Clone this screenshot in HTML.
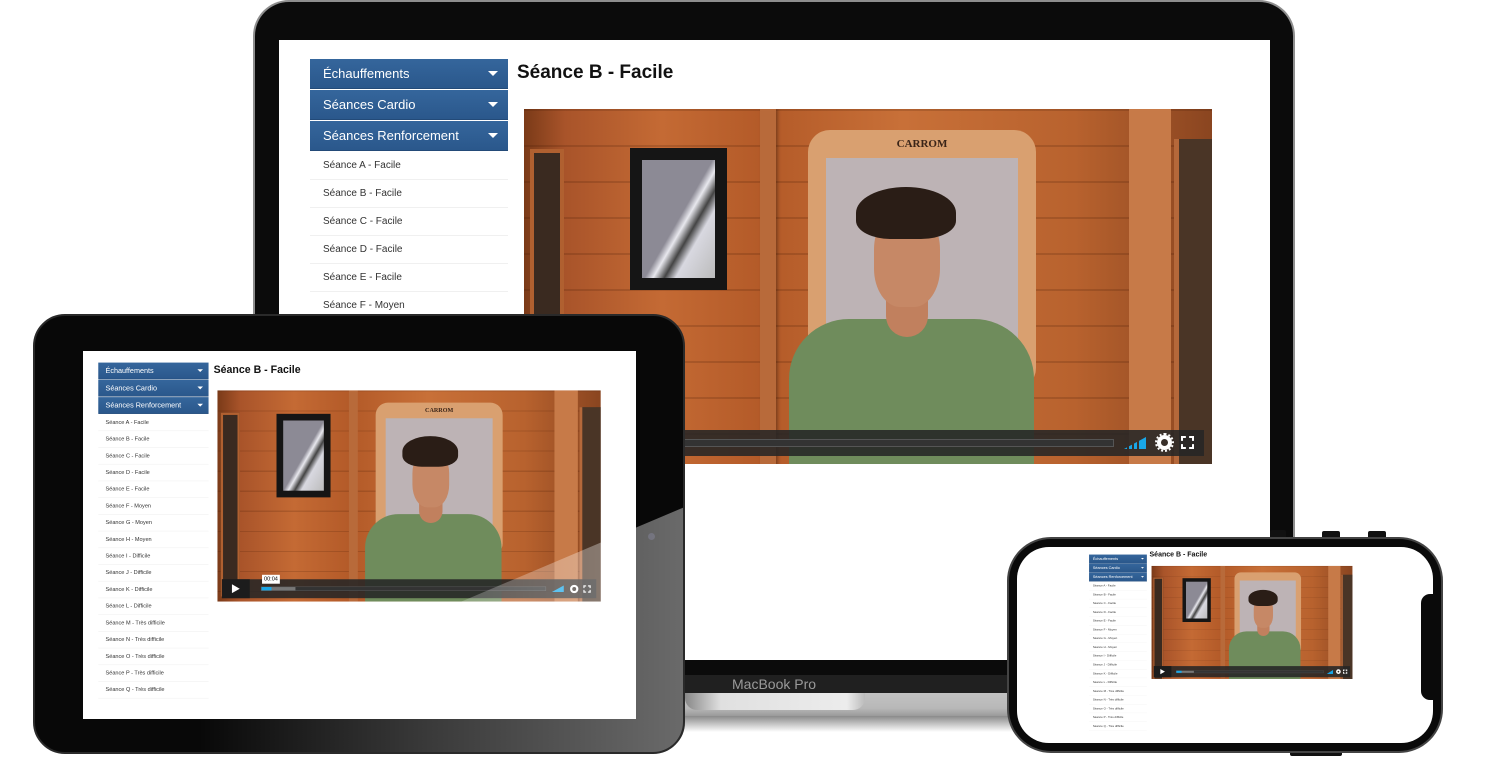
<!DOCTYPE html>
<html><head><meta charset="utf-8">
<style>
*{margin:0;padding:0;box-sizing:border-box}
body{width:1500px;height:783px;background:#fff;position:relative;overflow:hidden;font-family:"Liberation Sans",sans-serif}
.abs{position:absolute}
.page{position:absolute;width:991px;height:700px;transform-origin:0 0;background:#fff}
.side{position:absolute;left:31px;top:19px;width:198px}
.hd{height:30px;margin-bottom:1px;background:linear-gradient(#35669c,#2a578b);color:#fff;font-size:13px;line-height:30px;padding-left:13px;position:relative;box-shadow:inset 0 -1px 0 #234a78}
.hd:after{content:"";position:absolute;right:10px;top:12px;border-left:5px solid transparent;border-right:5px solid transparent;border-top:5px solid #fff}
.it{height:28px;line-height:28px;font-size:10px;color:#333;padding-left:13px;border-bottom:1px solid #f0f0f0}
.ttl{position:absolute;left:238px;top:22px;font-size:19px;font-weight:bold;color:#111}
.vid{position:absolute;left:245px;top:69px;width:688px;overflow:hidden;background:linear-gradient(90deg,#7a3a18 0,#a9542a 6%,#c46a34 20%,#b35a28 35%,#c87038 55%,#b8622e 80%,#8a4520 100%)}
.vid .pl{position:absolute;inset:0;background:repeating-linear-gradient(180deg,rgba(60,20,0,.18) 0 2px,transparent 2px 36px)}
.cb{position:absolute;left:8px;right:8px;bottom:8px;height:26px;background:rgba(38,38,38,.88)}
</style></head><body>

<!-- LAPTOP -->
<div class="abs" style="left:200px;top:690px;width:1150px;height:26px;background:linear-gradient(#c4c4c4,#b8b8b8 70%,#9a9a9a);border-radius:0 0 20px 20px"></div>
<div class="abs" style="left:685px;top:693px;width:180px;height:17px;background:linear-gradient(90deg,#888,#e0e0e0 20%,#ececec 90%,#bbb);border-radius:0 0 12px 12px"></div>
<div class="abs" style="left:200px;top:716px;width:1150px;height:16px;background:linear-gradient(#8a8a8a,rgba(220,220,220,0))"></div>
<div class="abs" style="left:253px;top:0;width:1042px;height:693px;background:#0b0b0b;border:2px solid #8e8e8e;border-bottom:none;border-radius:36px 36px 0 0"></div>
<div class="abs" style="left:255px;top:675px;width:1038px;height:18px;background:#202020"></div>
<div class="abs" style="left:732px;top:675px;font-size:14px;color:#9a9a9a;line-height:18px">MacBook Pro</div>
<div class="abs" style="left:279px;top:40px;width:991px;height:620px;overflow:hidden;background:#fff">
 <div class="page" style="left:0;top:0">
  <div class="side">
   <div class="hd">Échauffements</div><div class="hd">Séances Cardio</div><div class="hd">Séances Renforcement</div>
   <div class="it">Séance A - Facile</div><div class="it">Séance B - Facile</div><div class="it">Séance C - Facile</div><div class="it">Séance D - Facile</div><div class="it">Séance E - Facile</div><div class="it">Séance F - Moyen</div><div class="it">Séance G - Moyen</div><div class="it">Séance H - Moyen</div><div class="it">Séance I - Difficile</div><div class="it">Séance J - Difficile</div><div class="it">Séance K - Difficile</div><div class="it">Séance L - Difficile</div><div class="it">Séance M - Très difficile</div><div class="it">Séance N - Très difficile</div><div class="it">Séance O - Très difficile</div><div class="it">Séance P - Très difficile</div><div class="it">Séance Q - Très difficile</div>
  </div>
  <div class="ttl">Séance B - Facile</div>
  <div class="vid" style="height:355px">
   <div class="pl"></div>
   <div class="abs" style="left:6px;top:40px;width:34px;height:330px;background:#3a2a20;border:4px solid #b06030"></div>
   <div class="abs" style="left:236px;top:0;width:16px;height:400px;background:#b86a3a;box-shadow:2px 0 3px rgba(0,0,0,.3)"></div>
   <div class="abs" style="left:106px;top:39px;width:97px;height:142px;background:#151515;padding:12px"><div style="width:100%;height:100%;background:linear-gradient(120deg,#8c8a95 0 50%,#e8e8ee 56%,#444 64%,#d8d8e0 72%,#bbb)"></div></div>
   <div class="abs" style="left:284px;top:21px;width:228px;height:260px;background:#d9a070;border-radius:22px"><div class="abs" style="left:18px;top:28px;right:18px;bottom:14px;background:#bdb3b5"></div><div class="abs" style="left:0;right:0;top:8px;text-align:center;font-size:11px;font-weight:bold;color:#3a2418;font-family:'Liberation Serif',serif">CARROM</div></div>
   <div class="abs" style="left:605px;top:0;width:42px;height:400px;background:#c77a48"></div>
   <div class="abs" style="left:650px;top:30px;width:40px;height:370px;background:#4a3526;border-left:5px solid #b5683a"></div>
   <div class="abs" style="left:265px;top:210px;width:245px;height:220px;background:#6f8c5c;border-radius:60px 60px 0 0"></div>
   <div class="abs" style="left:362px;top:180px;width:42px;height:48px;background:#c1805e;border-radius:0 0 21px 21px"></div>
   <div class="abs" style="left:350px;top:102px;width:66px;height:96px;background:#c68866;border-radius:40%"></div>
   <div class="abs" style="left:332px;top:78px;width:100px;height:52px;background:#2a1d16;border-radius:50% 50% 35% 35%"></div>
   <div class="cb"><div class="abs" style="left:0;top:0;width:50px;height:26px;background:#1c1c1c"></div><div class="abs" style="left:10px;top:7px;border-left:11px solid #fff;border-top:6px solid transparent;border-bottom:6px solid transparent"></div><div class="abs" style="left:70px;right:90px;top:9px;height:8px;background:#333;border:1px solid #555"><div style="width:12%;height:100%;background:#777"></div></div><div class="abs" style="right:58px;top:7px;width:22px;height:12px;background:linear-gradient(90deg,#19a7e8 0 3px,transparent 3px 5px,#19a7e8 5px 8px,transparent 8px 10px,#19a7e8 10px 13px,transparent 13px 15px,#19a7e8 15px 18px);clip-path:polygon(0 100%,100% 0,100% 100%)"></div><div class="abs" style="right:32px;top:5px;width:15px;height:15px;border:4px solid #fff;border-radius:50%;outline:2px dotted #fff"></div><div class="abs" style="right:10px;top:6px;width:13px;height:13px;border:2px dashed #fff"></div></div>
  </div>
 </div>
</div>

<!-- TABLET -->
<div class="abs" style="left:33px;top:314px;width:652px;height:440px;background:#080808;border:2px solid #2a2a2a;border-radius:32px;overflow:hidden">
 <div class="abs" style="left:48px;top:35px;width:553px;height:368px;overflow:hidden;background:#fff">
  <div class="page" style="left:-2px;top:1px;transform:scale(.557)">
   <div class="side">
    <div class="hd">Échauffements</div><div class="hd">Séances Cardio</div><div class="hd">Séances Renforcement</div>
    <div class="it" style="height:30px;line-height:30px">Séance A - Facile</div><div class="it" style="height:30px;line-height:30px">Séance B - Facile</div><div class="it" style="height:30px;line-height:30px">Séance C - Facile</div><div class="it" style="height:30px;line-height:30px">Séance D - Facile</div><div class="it" style="height:30px;line-height:30px">Séance E - Facile</div><div class="it" style="height:30px;line-height:30px">Séance F - Moyen</div><div class="it" style="height:30px;line-height:30px">Séance G - Moyen</div><div class="it" style="height:30px;line-height:30px">Séance H - Moyen</div><div class="it" style="height:30px;line-height:30px">Séance I - Difficile</div><div class="it" style="height:30px;line-height:30px">Séance J - Difficile</div><div class="it" style="height:30px;line-height:30px">Séance K - Difficile</div><div class="it" style="height:30px;line-height:30px">Séance L - Difficile</div><div class="it" style="height:30px;line-height:30px">Séance M - Très difficile</div><div class="it" style="height:30px;line-height:30px">Séance N - Très difficile</div><div class="it" style="height:30px;line-height:30px">Séance O - Très difficile</div><div class="it" style="height:30px;line-height:30px">Séance P - Très difficile</div><div class="it" style="height:30px;line-height:30px">Séance Q - Très difficile</div>
   </div>
   <div class="ttl">Séance B - Facile</div>
   <div class="vid" style="height:379px">
    <div class="pl"></div>
    <div class="abs" style="left:6px;top:40px;width:34px;height:330px;background:#3a2a20;border:4px solid #b06030"></div>
    <div class="abs" style="left:236px;top:0;width:16px;height:400px;background:#b86a3a"></div>
    <div class="abs" style="left:106px;top:42px;width:97px;height:150px;background:#151515;padding:12px"><div style="width:100%;height:100%;background:linear-gradient(120deg,#8c8a95 0 50%,#e8e8ee 56%,#444 64%,#d8d8e0 72%,#bbb)"></div></div>
    <div class="abs" style="left:284px;top:22px;width:228px;height:275px;background:#d9a070;border-radius:22px"><div class="abs" style="left:18px;top:28px;right:18px;bottom:14px;background:#bdb3b5"></div><div class="abs" style="left:0;right:0;top:8px;text-align:center;font-size:11px;font-weight:bold;color:#3a2418;font-family:'Liberation Serif',serif">CARROM</div></div>
    <div class="abs" style="left:605px;top:0;width:42px;height:400px;background:#c77a48"></div>
    <div class="abs" style="left:650px;top:30px;width:40px;height:370px;background:#4a3526;border-left:5px solid #b5683a"></div>
    <div class="abs" style="left:265px;top:222px;width:245px;height:220px;background:#6f8c5c;border-radius:60px 60px 0 0"></div>
    <div class="abs" style="left:362px;top:190px;width:42px;height:48px;background:#c1805e;border-radius:0 0 21px 21px"></div>
    <div class="abs" style="left:350px;top:108px;width:66px;height:102px;background:#c68866;border-radius:40%"></div>
    <div class="abs" style="left:332px;top:82px;width:100px;height:55px;background:#2a1d16;border-radius:50% 50% 35% 35%"></div>
    <div class="cb" style="height:34px;bottom:6px"><div class="abs" style="left:0;top:0;width:50px;height:34px;background:#1c1c1c"></div><div class="abs" style="left:18px;top:9px;border-left:14px solid #fff;border-top:8px solid transparent;border-bottom:8px solid transparent"></div><div class="abs" style="left:70px;right:90px;top:13px;height:8px;background:#333;border:1px solid #555"><div style="width:12%;height:100%;background:#777"><div style="width:30%;height:100%;background:#19a7e8"></div></div></div><div class="abs" style="left:72px;top:-8px;width:32px;height:16px;background:#fff;color:#000;font-size:10px;text-align:center;line-height:16px">00:04</div><div class="abs" style="right:58px;top:11px;width:22px;height:12px;background:#19a7e8;clip-path:polygon(0 100%,100% 0,100% 100%)"></div><div class="abs" style="right:32px;top:10px;width:15px;height:15px;border:4px solid #fff;border-radius:50%"></div><div class="abs" style="right:10px;top:11px;width:13px;height:13px;border:2px dashed #fff"></div></div>
   </div>
  </div>
 </div>
 <div class="abs" style="left:613px;top:217px;width:7px;height:7px;border-radius:50%;background:#223"></div>
 <div class="abs" style="left:0;top:0;width:652px;height:440px;background:linear-gradient(90deg,rgba(255,255,255,0) 25%,rgba(255,255,255,.2) 60%,rgba(255,255,255,.4));clip-path:polygon(652px 190px,652px 440px,62px 440px)"></div>
</div>

<!-- PHONE -->
<div class="abs" style="left:1270px;top:530px;width:16px;height:10px;background:#111;border-radius:2px"></div>
<div class="abs" style="left:1322px;top:531px;width:18px;height:9px;background:#111;border-radius:2px"></div>
<div class="abs" style="left:1368px;top:531px;width:18px;height:9px;background:#111;border-radius:2px"></div>
<div class="abs" style="left:1290px;top:750px;width:52px;height:6px;background:#111;border-radius:2px"></div>
<div class="abs" style="left:1007px;top:537px;width:436px;height:216px;background:#0a0a0a;border:2px solid #444;border-radius:44px">
 <div class="abs" style="left:8px;top:8px;width:416px;height:196px;background:#fff;border-radius:32px;overflow:hidden">
  <div class="page" style="left:63px;top:2px;transform:scale(.292)">
   <div class="side">
    <div class="hd">Échauffements</div><div class="hd">Séances Cardio</div><div class="hd">Séances Renforcement</div>
    <div class="it" style="height:30px;line-height:30px">Séance A - Facile</div><div class="it" style="height:30px;line-height:30px">Séance B - Facile</div><div class="it" style="height:30px;line-height:30px">Séance C - Facile</div><div class="it" style="height:30px;line-height:30px">Séance D - Facile</div><div class="it" style="height:30px;line-height:30px">Séance E - Facile</div><div class="it" style="height:30px;line-height:30px">Séance F - Moyen</div><div class="it" style="height:30px;line-height:30px">Séance G - Moyen</div><div class="it" style="height:30px;line-height:30px">Séance H - Moyen</div><div class="it" style="height:30px;line-height:30px">Séance I - Difficile</div><div class="it" style="height:30px;line-height:30px">Séance J - Difficile</div><div class="it" style="height:30px;line-height:30px">Séance K - Difficile</div><div class="it" style="height:30px;line-height:30px">Séance L - Difficile</div><div class="it" style="height:30px;line-height:30px">Séance M - Très difficile</div><div class="it" style="height:30px;line-height:30px">Séance N - Très difficile</div><div class="it" style="height:30px;line-height:30px">Séance O - Très difficile</div><div class="it" style="height:30px;line-height:30px">Séance P - Très difficile</div><div class="it" style="height:30px;line-height:30px">Séance Q - Très difficile</div>
   </div>
   <div class="ttl" style="top:4px;font-size:24px">Séance B - Facile</div>
   <div class="vid" style="top:58px;height:387px">
    <div class="pl"></div>
    <div class="abs" style="left:6px;top:40px;width:34px;height:350px;background:#3a2a20;border:4px solid #b06030"></div>
    <div class="abs" style="left:236px;top:0;width:16px;height:400px;background:#b86a3a"></div>
    <div class="abs" style="left:106px;top:42px;width:97px;height:150px;background:#151515;padding:12px"><div style="width:100%;height:100%;background:linear-gradient(120deg,#8c8a95 0 50%,#e8e8ee 56%,#444 64%,#d8d8e0 72%,#bbb)"></div></div>
    <div class="abs" style="left:284px;top:22px;width:228px;height:280px;background:#d9a070;border-radius:22px"><div class="abs" style="left:18px;top:28px;right:18px;bottom:14px;background:#bdb3b5"></div></div>
    <div class="abs" style="left:605px;top:0;width:42px;height:400px;background:#c77a48"></div>
    <div class="abs" style="left:650px;top:30px;width:40px;height:370px;background:#4a3526;border-left:5px solid #b5683a"></div>
    <div class="abs" style="left:265px;top:224px;width:245px;height:220px;background:#6f8c5c;border-radius:60px 60px 0 0"></div>
    <div class="abs" style="left:362px;top:192px;width:42px;height:48px;background:#c1805e;border-radius:0 0 21px 21px"></div>
    <div class="abs" style="left:350px;top:108px;width:66px;height:104px;background:#c68866;border-radius:40%"></div>
    <div class="abs" style="left:332px;top:82px;width:100px;height:55px;background:#2a1d16;border-radius:50% 50% 35% 35%"></div>
    <div class="cb" style="height:38px;bottom:6px"><div class="abs" style="left:0;top:0;width:60px;height:38px;background:#1c1c1c"></div><div class="abs" style="left:22px;top:10px;border-left:16px solid #fff;border-top:9px solid transparent;border-bottom:9px solid transparent"></div><div class="abs" style="left:76px;right:90px;top:15px;height:9px;background:#333;border:1px solid #555"><div style="width:12%;height:100%;background:#777"><div style="width:30%;height:100%;background:#19a7e8"></div></div></div><div class="abs" style="right:58px;top:13px;width:22px;height:14px;background:#19a7e8;clip-path:polygon(0 100%,100% 0,100% 100%)"></div><div class="abs" style="right:32px;top:11px;width:16px;height:16px;border:5px solid #fff;border-radius:50%"></div><div class="abs" style="right:10px;top:12px;width:14px;height:14px;border:3px dashed #fff"></div></div>
   </div>
  </div>
 </div>
 <div class="abs" style="left:412px;top:55px;width:16px;height:106px;background:#0a0a0a;border-radius:9px 0 0 9px"></div>
</div>
</body></html>
